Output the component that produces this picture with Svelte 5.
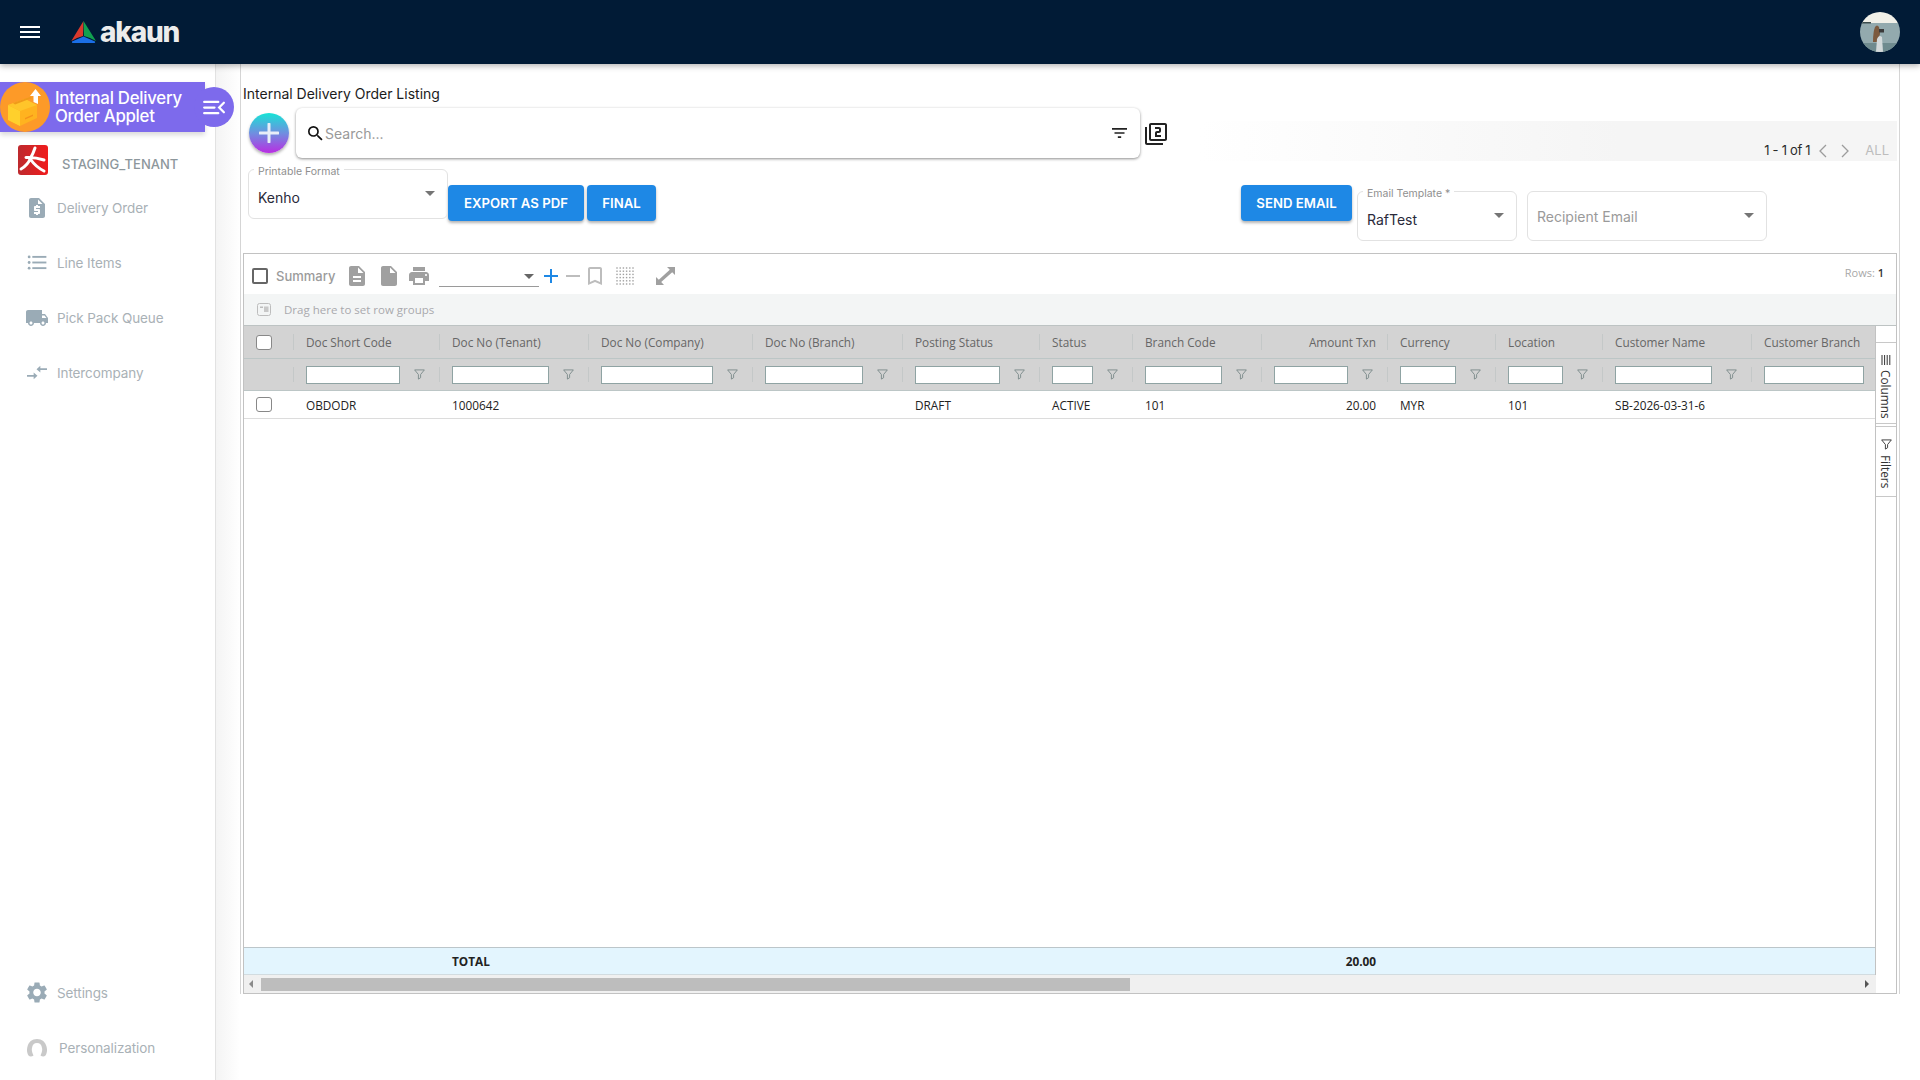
<script>
    const columns = [
        { title: 'Doc Short Code', width: 146, value: 'OBDODR' },
        { title: 'Doc No (Tenant)', width: 149, value: '1000642', total: 'TOTAL' },
        { title: 'Doc No (Company)', width: 164, value: '' },
        { title: 'Doc No (Branch)', width: 150, value: '' },
        { title: 'Posting Status', width: 137, value: 'DRAFT' },
        { title: 'Status', width: 93, value: 'ACTIVE' },
        { title: 'Branch Code', width: 129, value: '101' },
        { title: 'Amount Txn', width: 126, value: '20.00', total: '20.00', right: true },
        { title: 'Currency', width: 108, value: 'MYR' },
        { title: 'Location', width: 107, value: '101' },
        { title: 'Customer Name', width: 149, value: 'SB-2026-03-31-6' },
        { title: 'Customer Branch', width: 125, value: '', last: true }
    ];
    const template = '49px ' + columns.map((c) => c.width + 'px').join(' ');
</script>

<div class="page">
    <header class="topbar">
        <button class="menu" aria-label="menu"><span></span><span></span><span></span></button>
        <svg class="logo-mark" viewBox="0 0 25 22" aria-hidden="true">
            <path d="M12.5 0 L0.3 20 L6 17 L12 15 Z" fill="#d9392c" />
            <path d="M12.5 0 L25 20 L19 17 L13 15 Z" fill="#11a04f" />
            <path d="M12.5 15.5 L1 20.5 Q0.4 22 2 22 L23 22 Q24.8 22 24 20.5 Z" fill="#1b6fe6" />
        </svg>
        <span class="logo-text">akaun</span>
        <svg class="avatar" viewBox="0 0 40 40" aria-hidden="true">
            <defs><clipPath id="round"><circle cx="20" cy="20" r="20" /></clipPath></defs>
            <g clip-path="url(#round)">
                <rect width="40" height="12" fill="#f1f0e8" />
                <rect y="11" width="40" height="29" fill="#93aaae" />
                <rect y="31" width="40" height="9" fill="#6f8b8f" />
                <rect x="2" y="10" width="9" height="1.5" fill="#3c4c4c" />
                <path d="M13 30 Q13 20 15 15 Q17 12 19 15 L20 22 L17 30 Z" fill="#7c5a3e" />
                <path d="M16 40 L17 27 Q19 22 22 25 L23 40 Z" fill="#d4dadb" />
                <rect x="19" y="17" width="5" height="3.5" fill="#3a3a3a" />
            </g>
        </svg>
    </header>

    <div class="body">
        <aside class="sidebar">
            <div class="applet">
                <svg class="applet-icon" viewBox="0 0 50 50" aria-hidden="true">
                    <circle cx="25" cy="25" r="25" fill="#fd9a28" />
                    <path d="M8 23 L25 17 L37 23 L37 36 L20 44 L8 38 Z" fill="#ffb31f" />
                    <path d="M8 23 L20 29 L20 44 L8 38 Z" fill="#ffd02c" />
                    <path d="M8 23 L25 17 L37 23 L20 29 Z" fill="#ffc52a" />
                    <path d="M13 21 L30 15 L32 16 L15 22.5 Z" fill="#f09a1a" />
                    <path d="M25 36 L33 32.5 L33 34 L25 37.5 Z" fill="#f5921a" />
                    <path d="M35.5 7 L41 14 L38 14 L38 22 L33.5 20 L33.5 14 L30 14 Z" fill="#fff" />
                </svg>
                <span>Internal Delivery<br />Order Applet</span>
            </div>
            <button class="collapse" aria-label="collapse">
                <svg viewBox="0 0 24 16" aria-hidden="true">
                    <path d="M1 2 H16 M1 8 H12 M1 14 H16" stroke="#fff" stroke-width="2.4" fill="none" stroke-linecap="round" />
                    <path d="M22 3 L17 8 L22 13" stroke="#fff" stroke-width="2.4" fill="none" stroke-linecap="round" />
                </svg>
            </button>

            <div class="tenant">
                <svg viewBox="0 0 30 30" aria-hidden="true">
                    <defs>
                        <linearGradient id="red" x1="0" y1="0" x2="1" y2="0">
                            <stop offset="0" stop-color="#bd2a2e" />
                            <stop offset="1" stop-color="#f01c1c" />
                        </linearGradient>
                    </defs>
                    <rect width="30" height="30" rx="3" fill="url(#red)" />
                    <path d="M17 3 Q15 9 12.5 13 Q10 20 3 24 M8 12.5 Q17 12 26 15 M13 15 Q18 22 26 26" stroke="#fff" stroke-width="3" fill="none" stroke-linecap="round" />
                </svg>
                <span>STAGING_TENANT</span>
            </div>

            <nav class="nav">
                <a href="#a" class="nav-item">
                    <span class="nav-icon"><svg viewBox="0 0 24 24" class="i-doc"><path d="M14 2H6c-1.1 0-1.99.9-1.99 2L4 20c0 1.1.89 2 1.99 2H18c1.1 0 2-.9 2-2V8l-6-6zm1 10h-4v1h3c.55 0 1 .45 1 1v3c0 .55-.45 1-1 1h-1v1h-2v-1H9v-2h4v-1h-3c-.55 0-1-.45-1-1v-3c0-.55.45-1 1-1h1V9h2v1h2v2zm-2-4V3.5L17.5 8H13z" /></svg></span>
                    Delivery Order
                </a>
                <a href="#a" class="nav-item">
                    <span class="nav-icon">
                        <svg viewBox="0 0 20 16" class="i-list">
                            <circle cx="1.6" cy="2" r="1.5" /><circle cx="1.6" cy="8" r="1.5" /><circle cx="1.6" cy="14" r="1.5" />
                            <rect x="5" y="1" width="15" height="2" /><rect x="5" y="7" width="15" height="2" /><rect x="5" y="13" width="15" height="2" />
                        </svg>
                    </span>
                    Line Items
                </a>
                <a href="#a" class="nav-item">
                    <span class="nav-icon"><svg viewBox="1 4 22 16" class="i-truck"><path d="M20 8h-3V4H3c-1.1 0-2 .9-2 2v11h2c0 1.66 1.34 3 3 3s3-1.34 3-3h6c0 1.66 1.34 3 3 3s3-1.34 3-3h2v-5l-3-4zM6 18.5c-.83 0-1.5-.67-1.5-1.5s.67-1.5 1.5-1.5 1.5.67 1.5 1.5-.67 1.5-1.5 1.5zm13.5-9l1.96 2.5H17V9.5h2.5zm-1.5 9c-.83 0-1.5-.67-1.5-1.5s.67-1.5 1.5-1.5 1.5.67 1.5 1.5-.67 1.5-1.5 1.5z" /></svg></span>
                    Pick Pack Queue
                </a>
                <a href="#a" class="nav-item">
                    <span class="nav-icon">
                        <svg viewBox="0 0 21 14" class="i-list">
                            <path d="M0 9.5 H7 V7 L11 10.5 L7 14 V11.5 H0 Z" />
                            <path d="M21 2.5 H14 V0 L10 3.5 L14 7 V4.5 H21 Z" />
                        </svg>
                    </span>
                    Intercompany
                </a>
            </nav>

            <nav class="nav nav-bottom">
                <a href="#a" class="nav-item">
                    <span class="nav-icon"><svg viewBox="2.5 2 19 20" class="i-gear"><path d="M19.14 12.94c.04-.3.06-.61.06-.94 0-.32-.02-.64-.07-.94l2.03-1.58a.49.49 0 0 0 .12-.61l-1.92-3.32a.488.488 0 0 0-.59-.22l-2.39.96c-.5-.38-1.03-.7-1.62-.94l-.36-2.54a.484.484 0 0 0-.48-.41h-3.84c-.24 0-.43.17-.47.41l-.36 2.54c-.59.24-1.13.57-1.62.94l-2.39-.96c-.22-.08-.47 0-.59.22L2.74 8.87c-.12.21-.08.47.12.61l2.03 1.58c-.05.3-.09.63-.09.94s.02.64.07.94l-2.03 1.58a.49.49 0 0 0-.12.61l1.92 3.32c.12.22.37.29.59.22l2.39-.96c.5.38 1.03.7 1.62.94l.36 2.54c.05.24.24.41.48.41h3.84c.24 0 .44-.17.47-.41l.36-2.54c.59-.24 1.13-.56 1.62-.94l2.39.96c.22.08.47 0 .59-.22l1.92-3.32c.12-.22.07-.47-.12-.61l-2.01-1.58zM12 15.6c-1.98 0-3.6-1.62-3.6-3.6s1.62-3.6 3.6-3.6 3.6 1.62 3.6 3.6-1.62 3.6-3.6 3.6z" /></svg></span>
                    Settings
                </a>
                <a href="#a" class="nav-item wide">
                    <span class="nav-icon">
                        <svg viewBox="0 0 20 18" class="i-person">
                            <path d="M10 0 C15 0 18.5 3 19.5 7.5 C20.5 11 20 14.5 18.5 16.5 C17 18 15 17.5 13.5 16.5 C15 13.5 15.5 11 15 9 C14.5 5.5 13 4 10 4 C7 4 5.5 5.5 5 9 C4.5 11 5 13.5 6.5 16.5 C5 17.5 3 18 1.5 16.5 C0 14.5 -0.5 11 0.5 7.5 C1.5 3 5 0 10 0 Z" />
                        </svg>
                    </span>
                    Personalization
                </a>
            </nav>
        </aside>

        <div class="gutter"></div>

        <main class="content">
            <h1 class="title">Internal Delivery Order Listing</h1>

            <div class="search-row">
                <button class="add" aria-label="add">
                    <svg viewBox="0 0 20 20" aria-hidden="true"><path d="M10 1 V19 M1 10 H19" stroke="#e8eef8" stroke-width="3" stroke-linecap="round" /></svg>
                </button>
                <div class="search">
                    <svg class="s-icon" viewBox="3 3 18 18" aria-hidden="true"><path d="M15.5 14h-.79l-.28-.27A6.471 6.471 0 0 0 16 9.5 6.5 6.5 0 1 0 9.5 16c1.61 0 3.09-.59 4.23-1.57l.27.28v.79l5 4.99L20.49 19l-4.99-5zm-6 0C7.01 14 5 11.99 5 9.5S7.01 5 9.5 5 14 7.01 14 9.5 11.99 14 9.5 14z" /></svg>
                    <span class="s-text">Search...</span>
                    <svg class="s-filter" viewBox="3 6 18 12" aria-hidden="true"><path d="M10 18h4v-2h-4v2zM3 6v2h18V6H3zm3 7h12v-2H6v2z" /></svg>
                </div>
                <svg class="lib" viewBox="1 1 22 22" aria-hidden="true"><path d="M3 5H1v16c0 1.1.9 2 2 2h16v-2H3V5zm18-4H7c-1.1 0-2 .9-2 2v14c0 1.1.9 2 2 2h14c1.1 0 2-.9 2-2V3c0-1.1-.9-2-2-2zm0 16H7V3h14v14zm-4-4h-4v-2h2c1.1 0 2-.89 2-2V7c0-1.11-.9-2-2-2h-4v2h4v2h-2c-1.1 0-2 .89-2 2v4h6v-2z" /></svg>
                <div class="pager">
                    <span class="count">1 - 1 of 1</span>
                    <svg class="chev" viewBox="0 0 8 14"><path d="M7 1 L1 7 L7 13" /></svg>
                    <svg class="chev" viewBox="0 0 8 14"><path d="M1 1 L7 7 L1 13" /></svg>
                    <span class="all">ALL</span>
                </div>
            </div>

            <div class="action-row">
                <div class="field format">
                    <span class="legend">Printable Format</span>
                    <span class="value">Kenho</span>
                    <i class="caret"></i>
                </div>
                <button class="btn export">EXPORT AS PDF</button>
                <button class="btn final">FINAL</button>
                <button class="btn send">SEND EMAIL</button>
                <div class="field mail">
                    <span class="legend">Email Template *</span>
                    <span class="value">RafTest</span>
                    <i class="caret"></i>
                </div>
                <div class="field recipient">
                    <span class="placeholder">Recipient Email</span>
                    <i class="caret"></i>
                </div>
            </div>

            <section class="grid">
                <div class="toolbar">
                    <span class="tb-check"></span>
                    <span class="tb-summary">Summary</span>
                    <svg class="tb-doc" viewBox="4 2 16 20"><path d="M14 2H6c-1.1 0-1.99.9-1.99 2L4 20c0 1.1.89 2 1.99 2H18c1.1 0 2-.9 2-2V8l-6-6zm2 16H8v-2h8v2zm0-4H8v-2h8v2zm-3-5V3.5L18.5 9H13z" /></svg>
                    <svg class="tb-doc blank" viewBox="4 2 16 20"><path d="M6 2c-1.1 0-1.99.9-1.99 2L4 20c0 1.1.89 2 1.99 2H18c1.1 0 2-.9 2-2V8l-6-6H6zm7 7V3.5L18.5 9H13z" /></svg>
                    <svg class="tb-print" viewBox="2 3 20 18"><path d="M19 8H5c-1.66 0-3 1.34-3 3v6h4v4h12v-4h4v-6c0-1.66-1.34-3-3-3zm-3 11H8v-5h8v5zm3-7c-.55 0-1-.45-1-1s.45-1 1-1 1 .45 1 1-.45 1-1 1zm-1-9H6v4h12V3z" /></svg>
                    <div class="tb-select"><i class="caret dark"></i></div>
                    <svg class="tb-plus" viewBox="0 0 14 14"><path d="M7 0 V14 M0 7 H14" /></svg>
                    <svg class="tb-minus" viewBox="0 0 14 14"><path d="M0 7 H14" /></svg>
                    <svg class="tb-mark" viewBox="5 3 14 18"><path d="M17 3H7c-1.1 0-1.99.9-1.99 2L5 21l7-3 7 3V5c0-1.1-.9-2-2-2zm0 15l-5-2.18L7 18V5h10v13z" /></svg>
                    <svg class="tb-dots" viewBox="0 0 18 18">
                        {#each [1, 4.2, 7.4, 10.6, 13.8, 17] as y}
                            {#each [1, 4.2, 7.4, 10.6, 13.8, 17] as x}
                                <rect x={x - 0.7} y={y - 0.7} width="1.4" height="1.4" />
                            {/each}
                        {/each}
                    </svg>
                    <svg class="tb-expand" viewBox="0 0 19 18"><path d="M11 0 H19 V8 L16.2 5.2 L5.2 15 L8 18 H0 V10 L2.8 12.8 L13.8 2.8 Z" /></svg>
                    <span class="rows">Rows: <b>1</b></span>
                </div>

                <div class="group-panel">
                    <svg viewBox="0 0 14 13" aria-hidden="true">
                        <rect x="0.5" y="0.5" width="13" height="12" rx="2" fill="none" stroke="#bdbdbd" />
                        <rect x="3" y="3.5" width="3" height="1.5" fill="#bdbdbd" />
                        <rect x="7" y="3.5" width="4.5" height="5.5" fill="#c8c8c8" />
                    </svg>
                    Drag here to set row groups
                </div>

                <div class="grid-main">
                    <div class="table">
                        <div class="tr head" style="grid-template-columns: {template}">
                            <div class="th"><span class="cb"></span></div>
                            {#each columns as col}
                                <div class="th" class:right={col.right}>{col.title}</div>
                            {/each}
                        </div>
                        <div class="tr filter" style="grid-template-columns: {template}">
                            <div class="th"></div>
                            {#each columns as col}
                                <div class="th fcell">
                                    <span class="finput"></span>
                                    {#if !col.last}
                                        <span class="fbtn">
                                            <svg viewBox="0 0 12 12"><path d="M0.7 1 H11.3 L7.2 6 V9.5 L4.8 11 V6 Z" /></svg>
                                        </span>
                                    {/if}
                                </div>
                            {/each}
                        </div>
                        <div class="tr row" style="grid-template-columns: {template}">
                            <div class="td"><span class="cb"></span></div>
                            {#each columns as col}
                                <div class="td" class:right={col.right}>{col.value}</div>
                            {/each}
                        </div>
                        <div class="empty"></div>
                        <div class="tr total" style="grid-template-columns: {template}">
                            <div class="td"></div>
                            {#each columns as col}
                                <div class="td" class:right={col.right}>{col.total ?? ''}</div>
                            {/each}
                        </div>
                    </div>
                    <div class="side">
                        <div class="side-btn columns">
                            <svg viewBox="0 0 10 10"><path d="M1 0 V10 M3.6 0 V10 M6.2 0 V10 M8.8 0 V10" /></svg>
                            <span>Columns</span>
                        </div>
                        <div class="side-btn filters">
                            <svg viewBox="0 0 12 12"><path d="M0.7 1 H11.3 L7.2 6 V9.5 L4.8 11 V6 Z" /></svg>
                            <span>Filters</span>
                        </div>
                    </div>
                </div>

                <div class="scroll">
                    <i class="arrow l"></i>
                    <div class="thumb"></div>
                    <i class="arrow r"></i>
                </div>
            </section>
        </main>
    </div>
</div>

<style>
    :global(body) {
        margin: 0;
        background: #fff;
        font-family: Inter, "Open Sans", sans-serif;
    }

    .page {
        width: 1920px;
        height: 1080px;
        display: flex;
        flex-direction: column;
        overflow: hidden;
    }

    .topbar {
        height: 64px;
        flex: none;
        background: #011b36;
        display: flex;
        align-items: center;
        padding: 0 20px;
        box-sizing: border-box;
        box-shadow: 0 2px 6px rgba(0, 0, 0, 0.3);
        position: relative;
        z-index: 3;
    }

    .menu {
        width: 20px;
        height: 12px;
        padding: 0;
        background: none;
        border: 0;
        display: flex;
        flex-direction: column;
        justify-content: space-between;
    }

    .menu span {
        height: 2px;
        background: #fff;
        display: block;
    }

    .logo-mark {
        width: 25px;
        height: 22px;
        margin-left: 31px;
        margin-top: 0;
    }

    .logo-text {
        margin-left: 4px;
        font-weight: 800;
        font-size: 28px;
        letter-spacing: -1.2px;
        color: #ececec;
        line-height: 1;
        margin-top: -1px;
    }

    .avatar {
        width: 40px;
        height: 40px;
        margin-left: auto;
    }

    .body {
        flex: 1;
        display: flex;
        min-height: 0;
    }

    .sidebar {
        width: 216px;
        flex: none;
        box-sizing: border-box;
        border-right: 1px solid #e2e2e2;
        display: flex;
        flex-direction: column;
        position: relative;
        z-index: 2;
        padding-top: 18px;
    }

    .applet {
        width: 205px;
        height: 50px;
        background: #7d6aec;
        display: flex;
        align-items: center;
        color: #fff;
        font-size: 16.8px;
        line-height: 18px;
        font-weight: 500;
        letter-spacing: -0.25px;
        box-shadow: 0 3px 5px rgba(0, 0, 0, 0.15);
        position: relative;
        z-index: 1;
    }

    .applet-icon {
        width: 50px;
        height: 50px;
        margin-right: 5px;
        flex: none;
    }

    .collapse {
        position: absolute;
        left: 194px;
        top: 23px;
        width: 40px;
        height: 40px;
        border-radius: 50%;
        border: 0;
        padding: 0;
        background: #7d6aec;
        z-index: 2;
        display: flex;
        align-items: center;
        justify-content: center;
    }

    .collapse svg {
        width: 23px;
        height: 15px;
    }

    .tenant {
        display: flex;
        align-items: center;
        margin: 13px 0 0 18px;
        height: 30px;
        font-size: 13px;
        font-weight: 500;
        color: #8d979c;
    }

    .tenant svg {
        width: 30px;
        height: 30px;
        margin-right: 14px;
    }

    .tenant span {
        margin-top: 8px;
    }

    .nav {
        display: flex;
        flex-direction: column;
        margin-top: 5px;
    }

    .nav-bottom {
        margin-top: auto;
        margin-bottom: 5px;
    }

    .nav-item {
        height: 55px;
        display: flex;
        align-items: center;
        font-size: 13.5px;
        letter-spacing: -0.1px;
        color: #a9b1b6;
        text-decoration: none;
    }

    .nav-icon {
        width: 57px;
        display: flex;
        justify-content: center;
        padding-left: 19px;
        box-sizing: border-box;
        padding-right: 3px;
    }

    .nav-icon svg {
        fill: #9aabb6;
    }

    .i-doc {
        width: 24px;
        height: 24px;
    }

    .i-list {
        width: 20px;
        height: 15px;
    }

    .i-truck {
        width: 22px;
        height: 16px;
    }

    .i-gear {
        width: 20px;
        height: 21px;
    }

    .nav-icon .i-person {
        width: 20px;
        height: 18px;
        fill: #c9c9c9;
        flex: none;
    }

    .nav-item.wide .nav-icon {
        margin-right: 2px;
    }

    .gutter {
        width: 24px;
        flex: none;
        background: linear-gradient(90deg, #f4f4f4, #fff);
    }

    .content {
        width: 1660px;
        height: 930px;
        flex: none;
        box-sizing: border-box;
        border-left: 1px solid #d5d5d5;
        border-right: 1px solid #d5d5d5;
        padding-top: 20px;
    }

    .title {
        margin: 0 0 4px 2px;
        font-size: 14px;
        line-height: 20px;
        font-weight: 400;
        color: #1c1c1c;
    }

    .search-row {
        display: flex;
        align-items: flex-start;
        height: 53px;
    }

    .add {
        width: 40px;
        height: 40px;
        margin: 5px 7px 0 8px;
        padding: 0;
        border: 0;
        border-radius: 50%;
        flex: none;
        background: linear-gradient(180deg, #16e4d6, #6f8fe0 50%, #b92de2);
        box-shadow: 0 2px 3px rgba(0, 0, 0, 0.3);
        display: flex;
        align-items: center;
        justify-content: center;
    }

    .add svg {
        width: 20px;
        height: 20px;
    }

    .search {
        width: 844px;
        height: 50px;
        box-sizing: border-box;
        flex: none;
        background: #fff;
        border-radius: 6px;
        box-shadow: 0 1px 3px rgba(0, 0, 0, 0.45);
        display: flex;
        align-items: center;
        padding: 0 13px 0 12px;
    }

    .s-icon {
        width: 15px;
        height: 15px;
        margin-right: 2px;
        fill: #111;
    }

    .s-text {
        font-size: 14px;
        color: #999;
    }

    .s-filter {
        width: 15px;
        height: 10px;
        margin-left: auto;
        fill: #222;
    }

    .lib {
        width: 22px;
        height: 22px;
        margin: 15px 33px 0 5px;
        fill: #222;
        flex: none;
    }

    .pager {
        flex: 1;
        height: 40px;
        margin: 13px 2px 0 0;
        background: linear-gradient(90deg, #fff, #f5f5f5 60%);
        display: flex;
        align-items: flex-end;
        justify-content: flex-end;
        padding: 0 8px 3px 0;
        box-sizing: border-box;
        font-size: 13px;
        line-height: 16px;
    }

    .count {
        color: #2b2b2b;
        letter-spacing: -0.3px;
        margin-right: 9px;
    }

    .chev {
        width: 8px;
        height: 14px;
        margin: 0 14px 0 0;
        fill: none;
        stroke: #9c9c9c;
        stroke-width: 1.3;
    }

    .all {
        color: #bdbdbd;
        margin-left: 2px;
    }

    .action-row {
        display: flex;
        align-items: flex-start;
        height: 72px;
        margin: 8px 132px 12px 0;
    }

    .field {
        position: relative;
        height: 50px;
        box-sizing: border-box;
        border: 1px solid #e2e2e2;
        border-radius: 6px;
        flex: none;
        font-size: 14px;
    }

    .format {
        width: 200px;
        margin-left: 7px;
    }

    .mail {
        width: 160px;
        margin: 22px 10px 0 5px;
    }

    .recipient {
        width: 240px;
        margin-top: 22px;
    }

    .legend {
        position: absolute;
        left: 5px;
        top: -5px;
        background: #fff;
        padding: 0 4px;
        font-size: 10.5px;
        line-height: 14px;
        color: #8f8f8f;
        white-space: nowrap;
    }

    .value {
        position: absolute;
        left: 9px;
        top: 19px;
        line-height: 18px;
        color: #2a2a3a;
    }

    .placeholder {
        position: absolute;
        left: 9px;
        top: 16px;
        line-height: 18px;
        color: #9a9a9a;
    }

    .caret {
        position: absolute;
        right: 12px;
        top: 21px;
        width: 0;
        height: 0;
        border-left: 5px solid transparent;
        border-right: 5px solid transparent;
        border-top: 5px solid #757575;
    }

    .btn {
        height: 36px;
        margin-top: 16px;
        padding: 0;
        border: 0;
        border-radius: 4px;
        background: #1e88e5;
        color: #fff;
        font-family: inherit;
        font-size: 13.2px;
        font-weight: 600;
        box-shadow: 0 2px 3px rgba(0, 0, 0, 0.3);
        flex: none;
    }

    .export {
        width: 136px;
    }

    .final {
        width: 69px;
        margin-left: 3px;
    }

    .send {
        width: 111px;
        margin-left: auto;
    }

    .grid {
        width: 1654px;
        height: 741px;
        margin-left: 2px;
        box-sizing: border-box;
        border: 1px solid #c2c2c2;
        display: flex;
        flex-direction: column;
        font-family: "Open Sans", sans-serif;
        font-size: 11.8px;
    }

    .toolbar {
        height: 40px;
        flex: none;
        display: flex;
        align-items: center;
        position: relative;
        padding: 3px 0 0 8px;
        box-sizing: border-box;
    }

    .tb-check {
        width: 12px;
        height: 12px;
        border: 2px solid #666;
        border-radius: 2px;
        flex: none;
    }

    .tb-summary {
        margin-left: 8px;
        font-family: Inter, sans-serif;
        font-size: 13px;
        font-weight: 500;
        color: #9b9b9b;
        width: 73px;
    }

    .tb-doc {
        width: 16px;
        height: 20px;
        fill: #a0a0a0;
        flex: none;
    }

    .tb-doc.blank {
        margin-left: 16px;
    }

    .tb-print {
        width: 20px;
        height: 18px;
        margin-left: 12px;
        fill: #a0a0a0;
        flex: none;
    }

    .tb-select {
        position: relative;
        width: 100px;
        height: 22px;
        margin-left: 10px;
        box-sizing: border-box;
        border-bottom: 1px solid #9a9a9a;
        flex: none;
    }

    .caret.dark {
        top: 9px;
        right: 5px;
        border-top-color: #666;
    }

    .tb-plus,
    .tb-minus {
        width: 14px;
        height: 14px;
        margin-left: 5px;
        stroke-width: 2;
        fill: none;
        flex: none;
    }

    .tb-plus {
        stroke: #1e88e5;
    }

    .tb-minus {
        margin-left: 8px;
        stroke: #bdbdbd;
    }

    .tb-mark {
        width: 14px;
        height: 18px;
        margin-left: 8px;
        fill: #bdbdbd;
        flex: none;
    }

    .tb-dots {
        width: 18px;
        height: 18px;
        margin-left: 14px;
        fill: #a0a0a0;
        flex: none;
    }

    .tb-expand {
        width: 19px;
        height: 18px;
        margin-left: 22px;
        fill: #a0a0a0;
        flex: none;
    }

    .rows {
        margin-left: auto;
        margin-right: 12px;
        margin-top: -7px;
        font-size: 11px;
        color: #a8a8a8;
    }

    .rows b {
        color: #333;
        font-weight: 600;
    }

    .group-panel {
        height: 32px;
        flex: none;
        background: #f3f5f5;
        display: flex;
        align-items: center;
        padding-left: 13px;
        color: #a9a9ad;
        font-size: 11.5px;
        box-sizing: border-box;
        border-bottom: 1px solid #bdc3c3;
    }

    .group-panel svg {
        width: 14px;
        height: 13px;
        margin-right: 13px;
    }

    .grid-main {
        flex: 1;
        display: flex;
        min-height: 0;
    }

    .table {
        flex: 1;
        min-width: 0;
        display: flex;
        flex-direction: column;
        overflow: hidden;
    }

    .tr {
        display: grid;
        flex: none;
    }

    .head {
        height: 33px;
        box-sizing: border-box;
        background: #d3d3d3;
        border-bottom: 1px solid #bcc6c6;
    }

    .filter {
        height: 32px;
        box-sizing: border-box;
        background: #d3d3d3;
        border-bottom: 1px solid #bcc6c6;
    }

    .th {
        display: flex;
        align-items: center;
        padding-left: 13px;
        color: #666;
        white-space: nowrap;
        position: relative;
        box-sizing: border-box;
        min-width: 0;
    }

    .th:first-child,
    .td:first-child {
        padding-left: 12px;
    }

    .th + .th::before {
        content: "";
        position: absolute;
        left: 0;
        top: 8px;
        bottom: 8px;
        width: 1px;
        background: #c4c8c8;
    }

    .th.right,
    .td.right {
        justify-content: flex-end;
        padding-right: 11px;
    }

    .finput {
        flex: 1;
        min-width: 0;
        height: 18px;
        background: #fff;
        border: 1px solid #8fa3a3;
        box-sizing: border-box;
    }

    .fcell:last-child {
        padding-right: 12px;
    }

    .fbtn {
        width: 39px;
        flex: none;
        display: flex;
        justify-content: center;
    }

    .fbtn svg {
        width: 11px;
        height: 11px;
        fill: none;
        stroke: #7b8a8a;
    }

    .row {
        height: 28px;
        box-sizing: border-box;
        border-bottom: 1px solid #dcdcdc;
        background: #fff;
    }

    .td {
        display: flex;
        align-items: center;
        padding-left: 13px;
        color: #222;
        white-space: nowrap;
        box-sizing: border-box;
        min-width: 0;
    }

    .cb {
        width: 16px;
        height: 15px;
        box-sizing: border-box;
        border: 1px solid #888;
        border-radius: 3px;
        background: #fff;
    }

    .empty {
        flex: 1;
    }

    .total {
        height: 28px;
        box-sizing: border-box;
        background: #e3f5fe;
        border-top: 1px solid #bcc6ca;
        border-bottom: 1px solid #d2dce0;
    }

    .total .td {
        font-weight: 700;
        color: #222;
    }

    .side {
        width: 21px;
        flex: none;
        box-sizing: border-box;
        border-left: 1px solid #c2c2c2;
        padding-top: 16px;
        font-size: 11.8px;
        color: #333;
    }

    .side-btn {
        display: flex;
        flex-direction: column;
        align-items: center;
        box-sizing: border-box;
        border-top: 1px solid #c8c8c8;
        border-bottom: 1px solid #c8c8c8;
        margin-bottom: 2px;
        padding-top: 12px;
    }

    .side-btn span {
        writing-mode: vertical-rl;
        margin-top: 5px;
        line-height: 16px;
    }

    .columns {
        height: 82px;
    }

    .filters {
        height: 71px;
    }

    .columns svg {
        width: 10px;
        height: 10px;
        stroke: #333;
        fill: none;
    }

    .filters svg {
        width: 11px;
        height: 11px;
        stroke: #333;
        fill: none;
    }

    .scroll {
        height: 18px;
        flex: none;
        background: #f0f0f0;
        width: 1632px;
        display: flex;
        align-items: center;
        position: relative;
    }

    .thumb {
        width: 869px;
        height: 13px;
        margin-left: 17px;
        background: #bdbdbd;
    }

    .arrow {
        width: 0;
        height: 0;
        border-top: 4px solid transparent;
        border-bottom: 4px solid transparent;
        position: absolute;
    }

    .arrow.l {
        left: 5px;
        border-right: 4px solid #8a8a8a;
    }

    .arrow.r {
        right: 7px;
        border-left: 4px solid #555;
    }
</style>
